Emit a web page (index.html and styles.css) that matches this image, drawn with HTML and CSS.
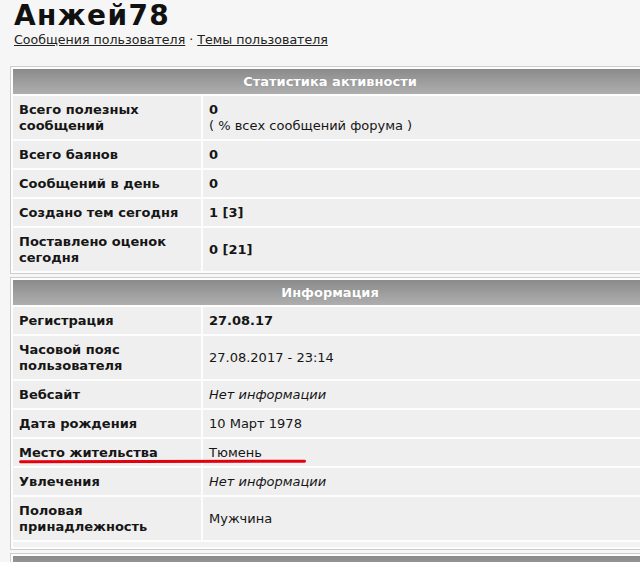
FILE: index.html
```html
<!DOCTYPE html>
<html lang="ru">
<head>
<meta charset="utf-8">
<title>Анжей78</title>
<link rel="stylesheet" href="styles.css">
</head>
<body>
<div class="page">
  <h1 class="user-name">Анжей78</h1>
  <div class="user-links"><a href="#">Сообщения пользователя</a> · <a href="#">Темы пользователя</a></div>

  <table class="panel">
    <tr><th colspan="2">Статистика активности</th></tr>
    <tr><td class="lbl">Всего полезных<br>сообщений</td><td class="val"><b>0</b><br>( % всех сообщений форума )</td></tr>
    <tr><td class="lbl">Всего баянов</td><td class="val"><b>0</b></td></tr>
    <tr><td class="lbl">Сообщений в день</td><td class="val"><b>0</b></td></tr>
    <tr><td class="lbl">Создано тем сегодня</td><td class="val"><b>1 [3]</b></td></tr>
    <tr><td class="lbl">Поставлено оценок<br>сегодня</td><td class="val"><b>0 [21]</b></td></tr>
  </table>

  <table class="panel">
    <tr><th colspan="2">Информация</th></tr>
    <tr><td class="lbl">Регистрация</td><td class="val"><b>27.08.17</b></td></tr>
    <tr><td class="lbl">Часовой пояс<br>пользователя</td><td class="val">27.08.2017 - 23:14</td></tr>
    <tr><td class="lbl">Вебсайт</td><td class="val"><i>Нет информации</i></td></tr>
    <tr><td class="lbl">Дата рождения</td><td class="val">10 Март 1978</td></tr>
    <tr><td class="lbl">Место жительства</td><td class="val">Тюмень</td></tr>
    <tr><td class="lbl">Увлечения</td><td class="val"><i>Нет информации</i></td></tr>
    <tr><td class="lbl">Половая<br>принадлежность</td><td class="val">Мужчина</td></tr>
    <tr><td class="foot" colspan="2"></td></tr>
  </table>

  <table class="panel">
    <tr><th class="dark" colspan="2">&nbsp;</th></tr>
  </table>

  <div class="marker"></div>
</div>
</body>
</html>
```
FILE: styles.css
```css
html, body {
  margin: 0;
  padding: 0;
  overflow: hidden;
  background: #f6f6f6;
}
.page {
  position: relative;
  width: 660px;
  font-family: "DejaVu Sans", Verdana, sans-serif;
  color: #161616;
  font-size: 13px;
  line-height: 16px;
}
.user-name {
  margin: 0 0 0 14px;
  padding-top: 1px;
  font-size: 28px;
  line-height: 30px;
  letter-spacing: 1.4px;
  font-weight: bold;
  color: #111;
}
.user-links {
  margin: 1px 0 0 14px;
  font-size: 12.6px;
  line-height: 16px;
}
.user-links a {
  color: #222;
  text-decoration: underline;
}
.panel {
  margin: 18px 0 0 10px;
  width: 640px;
  border: 1px solid #cdcdcd;
  border-collapse: separate;
  border-spacing: 2px;
  background: #fdfdfd;
}
.panel + .panel {
  margin-top: 3px;
}
.panel th {
  height: 25px;
  padding: 0;
  background: linear-gradient(#8b8b8b, #aeaeae);
  color: #fff;
  font-weight: bold;
  font-size: 13px;
  text-align: center;
  text-shadow: 0 0 1px rgba(0,0,0,0.15);
}
.panel td {
  background: #efefef;
  padding: 6px 6px 5px;
  vertical-align: middle;
}
.panel td.lbl {
  width: 176px;
  font-weight: bold;
}
.panel td.foot {
  height: 5px;
  padding: 0;
  background: #f2f2f2;
}
.marker {
  position: absolute;
  left: 19px;
  top: 460px;
  width: 287px;
  height: 3px;
  border-radius: 2px;
  background: #e5000f;
  transform: rotate(-0.1deg);
}
```
